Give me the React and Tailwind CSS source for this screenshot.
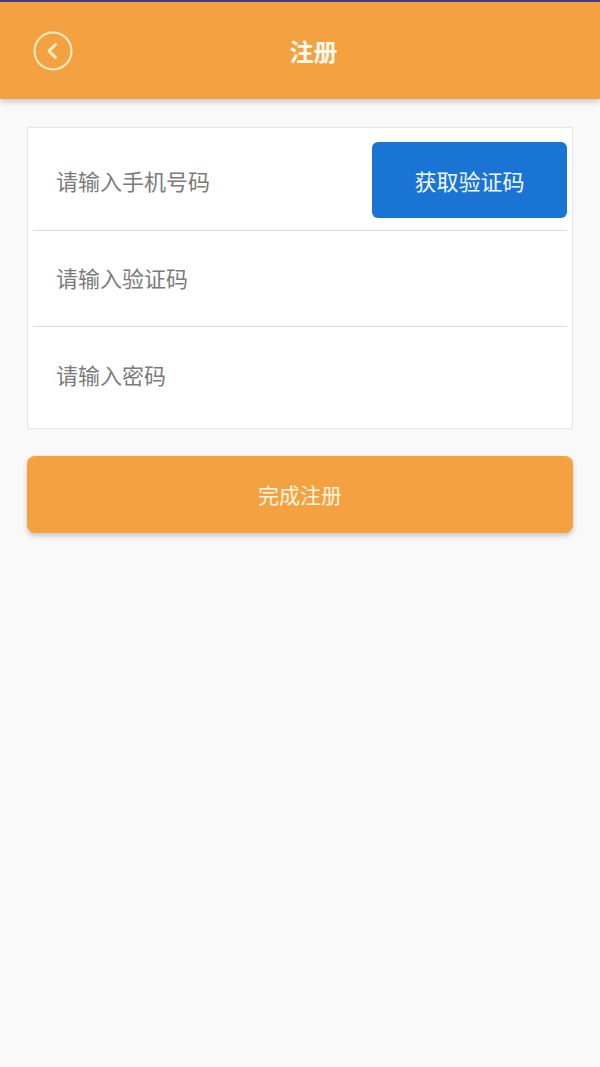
import React from 'react';

function BackIcon() {
  return (
    <svg width="40" height="40" viewBox="0 0 40 40" fill="none">
      <circle cx="20" cy="20" r="18.5" stroke="#fdebc4" strokeWidth="2" />
      <path d="M22.5 13.5 L16 20 L22.5 26.5" stroke="#fdebc4" strokeWidth="3" strokeLinecap="round" strokeLinejoin="round" />
    </svg>
  );
}

export default function App() {
  const font = { fontFamily: '"Noto Sans CJK SC", "Noto Sans", sans-serif' };

  return (
    <div className="min-h-[1067px] w-full bg-[#f9f9f9]" style={font}>
      {/* status strip */}
      <div className="h-[2px] bg-[#4b3c7c]" />

      {/* Header */}
      <header className="h-[97px] bg-[#f4a241] flex items-center shadow-[0_3px_6px_rgba(0,0,0,0.18)] relative z-10">
        <button className="ml-[33px] w-[40px] h-[40px] flex items-center justify-center">
          <BackIcon />
        </button>
        <h1 className="flex-1 text-center pr-[46px] text-[24px] font-bold leading-none text-[#fffaf0]">
          注册
        </h1>
      </header>

      {/* Form card */}
      <div className="mx-[27px] mt-[28px] bg-white border border-[#e6e6e6]">
        <div className="h-[102px] flex items-center pt-[2px] pl-[28px] pr-[5px]">
          <span className="flex-1 text-[22px] leading-none text-[#7b7b7b]">请输入手机号码</span>
          <button className="w-[195px] h-[76px] rounded-[6px] bg-[#1a74d4] text-[22px] leading-none text-[#f4f8ff]">
            获取验证码
          </button>
        </div>
        <div className="mx-[5px] h-px bg-[#dcdcdc]" />
        <div className="h-[95px] flex items-center pb-[4px] pl-[28px]">
          <span className="text-[22px] leading-none text-[#7b7b7b]">请输入验证码</span>
        </div>
        <div className="mx-[5px] h-px bg-[#dcdcdc]" />
        <div className="h-[101px] flex items-center pb-[7px] pl-[28px]">
          <span className="text-[22px] leading-none text-[#7b7b7b]">请输入密码</span>
        </div>
      </div>

      {/* Submit */}
      <div className="mx-[27px] mt-[27px]">
        <button className="w-full h-[77px] rounded-[8px] bg-[#f4a241] shadow-[0_3px_5px_rgba(0,0,0,0.2)] text-[21px] leading-none text-[#fff6e0]">
          完成注册
        </button>
      </div>
    </div>
  );
}
